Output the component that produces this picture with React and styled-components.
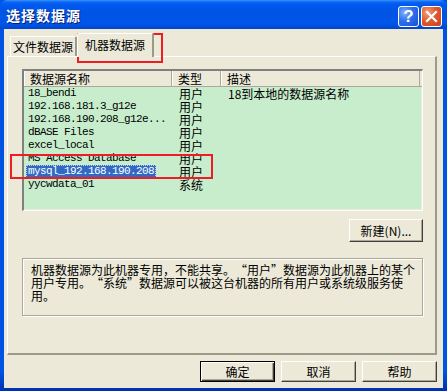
import React from 'react'
import styled, { createGlobalStyle } from 'styled-components'

const GlobalStyle = createGlobalStyle`
  html, body {
    margin: 0;
    padding: 0;
    background: #fff;
  }
  body {
    font-family: "Noto Sans CJK SC", "Liberation Sans", sans-serif;
    font-size: 12px;
    color: #000;
  }
`

const CJK = `"Noto Sans CJK SC", "Liberation Sans", sans-serif`
const MONO = `"Liberation Mono", "Noto Sans CJK SC", monospace`

const rows = [
  { name: '18_bendi', type: '用户', desc: '18到本地的数据源名称' },
  { name: '192.168.181.3_g12e', type: '用户' },
  { name: '192.168.190.208_g12e...', type: '用户' },
  { name: 'dBASE Files', type: '用户' },
  { name: 'excel_local', type: '用户' },
  { name: 'MS Access Database', type: '用户' },
  { name: 'mysql_192.168.190.208', type: '用户', selected: true },
  { name: 'yycwdata_01', type: '系统' },
]

const App = () => {
  return (
    <>
      <GlobalStyle />
      <Window lang="zh-CN">
        <TitleBar>
          <Title>选择数据源</Title>
          <Controls>
            <CaptionButton>
              <HelpMark>?</HelpMark>
            </CaptionButton>
            <CaptionButton $close>
              <svg width="13" height="13" viewBox="0 0 13 13">
                <path d="M2 2 L11 11 M11 2 L2 11" stroke="#fff" strokeWidth="2.2" strokeLinecap="square" />
              </svg>
            </CaptionButton>
          </Controls>
        </TitleBar>
        <Frame>
          <TabStrip>
            <Tab>文件数据源</Tab>
            <Tab $active>机器数据源</Tab>
          </TabStrip>
          <Panel>
            <ListBox>
              <HeaderRow>
                <HeaderCell>数据源名称</HeaderCell>
                <HeaderCell>类型</HeaderCell>
                <HeaderCell>描述</HeaderCell>
                <HeaderRest />
              </HeaderRow>
              {rows.map((r) => (
                <Row key={r.name}>
                  <NameCell>
                    <NameText $selected={r.selected}>{r.name}</NameText>
                  </NameCell>
                  <TypeCell>{r.type}</TypeCell>
                  <DescCell>{r.desc}</DescCell>
                </Row>
              ))}
            </ListBox>
            <ActionRow>
              <Button $width={74} $height={23}>新建(N)...</Button>
            </ActionRow>
            <InfoBox>
              <InfoLine>机器数据源为此机器专用，不能共享。<Q>“</Q>用户<Q>”</Q>数据源为此机器上的某个</InfoLine>
              <InfoLine>用户专用。<Q>“</Q>系统<Q>”</Q>数据源可以被这台机器的所有用户或系统级服务使</InfoLine>
              <InfoLine>用。</InfoLine>
            </InfoBox>
          </Panel>
          <DialogButtons>
            <Button $default>确定</Button>
            <Button>取消</Button>
            <Button>帮助</Button>
          </DialogButtons>
        </Frame>
        <Marker style={{ left: 77, top: 33, width: 86, height: 30 }} />
        <Marker style={{ left: 10, top: 154, width: 203, height: 25 }} />
      </Window>
    </>
  )
}

export default App

const Window = styled.div`
  position: relative;
  width: 447px;
  height: 391px;
  display: flex;
  flex-direction: column;
  overflow: hidden;
  background: linear-gradient(to bottom, #0054e3 0%, #0054e3 95%, #0030b0 100%);
`

const TitleBar = styled.div`
  height: 29px;
  flex: none;
  display: flex;
  align-items: center;
  justify-content: space-between;
  padding: 0 5px 0 6px;
  background: linear-gradient(
    to bottom,
    #3d95ff 0px,
    #0a66f5 2px,
    #0058ee 5px,
    #0054e3 14px,
    #0055eb 24px,
    #0046c8 29px
  );
  border-radius: 7px 7px 0 0;
`

const Title = styled.div`
  font-family: ${CJK};
  font-weight: 700;
  font-size: 14px;
  letter-spacing: 1px;
  color: #fff;
  text-shadow: 1px 1px 0 #0a1e6e;
  line-height: 16px;
  margin-top: 1px;
`

const Controls = styled.div`
  display: flex;
  gap: 2px;
  margin-top: 3px;
`

const CaptionButton = styled.div`
  width: 19px;
  height: 19px;
  border: 1px solid #fff;
  border-radius: 3px;
  display: flex;
  align-items: center;
  justify-content: center;
  background: ${(p) =>
    p.$close
      ? 'radial-gradient(circle at 30% 30%, #f2a080 0%, #e15a2d 45%, #c8401a 100%)'
      : 'radial-gradient(circle at 30% 30%, #7fb0ff 0%, #2e6ff0 45%, #1c4fd0 100%)'};
`

const HelpMark = styled.span`
  font-family: "Liberation Sans", sans-serif;
  font-weight: 700;
  font-size: 17px;
  line-height: 17px;
  color: #fff;
`

const Frame = styled.div`
  flex: 1;
  display: flex;
  flex-direction: column;
  background: #ece9d8;
  margin: 0 4px 3px 4px;
  padding: 4px 6px 0 3px;
`

const TabStrip = styled.div`
  height: 23px;
  display: flex;
  align-items: flex-end;
  padding-left: 3px;
  position: relative;
  z-index: 1;
`

const Tab = styled.div`
  height: ${(p) => (p.$active ? '24px' : '20px')};
  width: ${(p) => (p.$active ? '77px' : '67px')};
  margin-bottom: ${(p) => (p.$active ? '-1px' : '0')};
  box-sizing: border-box;
  background: #ece9d8;
  border-top: 1px solid #fff;
  border-left: 1px solid #fff;
  border-right: 2px solid #9d9a8c;
  border-radius: 2px 2px 0 0;
  display: flex;
  justify-content: center;
  align-items: ${(p) => (p.$active ? 'flex-start' : 'center')};
  padding-top: ${(p) => (p.$active ? '4px' : '0')};
  font-family: ${CJK};
  font-size: 12px;
  line-height: 14px;
`

const Panel = styled.div`
  height: 299px;
  box-sizing: border-box;
  display: flex;
  flex-direction: column;
  padding: 12px 12px 0 14px;
  border-top: 1px solid #fff;
  border-left: 1px solid #fff;
  border-right: 2px solid #9d9a8c;
  border-bottom: 2px solid #9d9a8c;
`

const ListBox = styled.div`
  width: 401px;
  height: 142px;
  box-sizing: border-box;
  background: #c7edcc;
  border-top: 2px solid #808080;
  border-left: 2px solid #808080;
  border-right: 1px solid #fff;
  border-bottom: 1px solid #fff;
  box-shadow: inset -1px -1px 0 #ece9d8;
  overflow: hidden;
`

const HeaderRow = styled.div`
  display: grid;
  grid-template-columns: 148px 49px 199px 1fr;
  height: 16px;
`

const HeaderCell = styled.div`
  background: #ece9d8;
  box-shadow: inset -1px -1px 0 #aca899, inset 1px 0 0 #fff;
  padding-left: 6px;
  font-family: ${CJK};
  font-size: 12px;
  line-height: 16px;
  overflow: hidden;
`

const HeaderRest = styled.div`
  background: #ece9d8;
  box-shadow: inset 0 -1px 0 #aca899;
`

const Row = styled.div`
  display: grid;
  grid-template-columns: 148px 49px 1fr;
  height: 13px;
  overflow: hidden;
`

const NameCell = styled.div`
  display: flex;
  align-items: center;
  height: 13px;
  padding-left: 2px;
  white-space: nowrap;
`

const NameText = styled.span`
  display: block;
  height: 13px;
  padding: 0 2px;
  box-sizing: border-box;
  font-family: ${MONO};
  font-size: 11px;
  letter-spacing: -0.6px;
  line-height: 13px;
  background: ${(p) => (p.$selected ? '#316ac5' : 'transparent')};
  color: ${(p) => (p.$selected ? '#fff' : '#000')};
  outline: ${(p) => (p.$selected ? '1px dotted #c0d2f0' : 'none')};
  outline-offset: -1px;
`

const TypeCell = styled.div`
  height: 13px;
  padding-left: 7px;
  font-family: ${CJK};
  font-size: 12px;
  line-height: 13px;
`

const DescCell = styled.div`
  height: 13px;
  padding-left: 7px;
  font-family: ${CJK};
  font-size: 12px;
  line-height: 13px;
  white-space: nowrap;
`

const ActionRow = styled.div`
  width: 401px;
  display: flex;
  justify-content: flex-end;
  margin-top: 8px;
`

const Button = styled.div`
  width: ${(p) => p.$width || 75}px;
  height: ${(p) => p.$height || 21}px;
  box-sizing: border-box;
  display: flex;
  align-items: center;
  justify-content: center;
  background: #ece9d8;
  font-family: ${CJK};
  font-size: 12px;
  line-height: 14px;
  border-top: 1px solid #fff;
  border-left: 1px solid #fff;
  border-right: 1px solid #404040;
  border-bottom: 1px solid #404040;
  box-shadow: inset -1px -1px 0 #aca899;
  ${(p) =>
    p.$default &&
    `
    border: 1px solid #000;
    box-shadow: inset 1px 1px 0 #fff, inset -1px -1px 0 #404040, inset -2px -2px 0 #aca899;
  `}
`

const InfoBox = styled.div`
  width: 401px;
  height: 58px;
  box-sizing: border-box;
  margin-top: 16px;
  border: 1px solid #aca899;
  box-shadow: inset 1px 1px 0 #fff, 1px 1px 0 #fff;
  padding: 4px 0 0 8px;
  font-family: ${CJK};
  font-size: 12px;
  line-height: 13px;
`

const InfoLine = styled.div`
  white-space: nowrap;
`

const Q = styled.span`
  display: inline-block;
  width: 12px;
  text-align: ${(p) => (p.children === '“' ? 'right' : 'left')};
`

const DialogButtons = styled.div`
  display: flex;
  justify-content: flex-end;
  gap: 6px;
  margin-top: 6px;
`

const Marker = styled.div`
  position: absolute;
  box-sizing: border-box;
  border: 2px solid #ee1c25;
  pointer-events: none;
`
